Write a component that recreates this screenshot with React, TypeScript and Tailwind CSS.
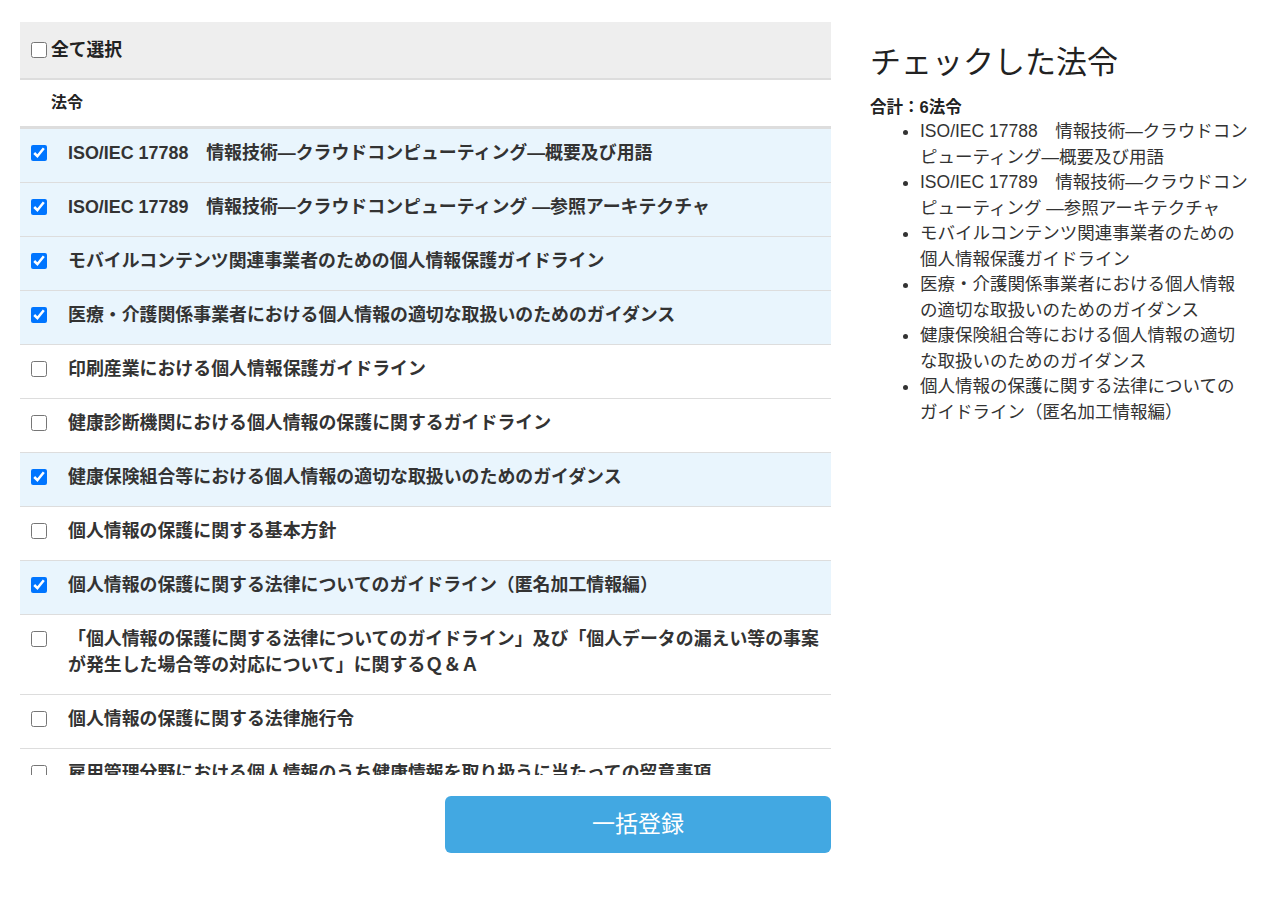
import React, { useState } from 'react';

const LAWS = [
  'ISO/IEC 17788　情報技術―クラウドコンピューティング―概要及び用語',
  'ISO/IEC 17789　情報技術―クラウドコンピューティング ―参照アーキテクチャ',
  'モバイルコンテンツ関連事業者のための個人情報保護ガイドライン',
  '医療・介護関係事業者における個人情報の適切な取扱いのためのガイダンス',
  '印刷産業における個人情報保護ガイドライン',
  '健康診断機関における個人情報の保護に関するガイドライン',
  '健康保険組合等における個人情報の適切な取扱いのためのガイダンス',
  '個人情報の保護に関する基本方針',
  '個人情報の保護に関する法律についてのガイドライン（匿名加工情報編）',
  '「個人情報の保護に関する法律についてのガイドライン」及び「個人データの漏えい等の事案が発生した場合等の対応について」に関するＱ＆Ａ',
  '個人情報の保護に関する法律施行令',
  '雇用管理分野における個人情報のうち健康情報を取り扱うに当たっての留意事項',
  '個人情報の保護に関する法律施行規則',
];

const font = { fontFamily: '"Liberation Sans", "Noto Sans CJK JP", sans-serif' };

export default function App() {
  const [checked, setChecked] = useState<boolean[]>(
    LAWS.map((_, i) => [0, 1, 2, 3, 6, 8].includes(i))
  );

  const toggle = (i: number) => {
    setChecked((prev) => prev.map((c, idx) => (idx === i ? !c : c)));
  };

  const allChecked = checked.every(Boolean);
  const selected = LAWS.filter((_, i) => checked[i]);

  return (
    <div className="min-h-[901px] bg-white text-[#333] flex pl-[20px] pt-[22px]" style={font}>
      {/* Left: law list */}
      <div className="w-[811px] flex flex-col">
        <div className="h-[56px] bg-[#eeeeee] border-b-2 border-[#dddddd] flex items-center pl-[11px] box-content">
          <label className="flex items-center gap-[4px] text-[17.8px] font-bold text-[#222] cursor-pointer">
            <input
              type="checkbox"
              checked={allChecked}
              onChange={() => setChecked(LAWS.map(() => !allChecked))}
              className="w-[16px] h-[16px] m-0"
            />
            全て選択
          </label>
        </div>
        <div className="h-[46px] border-b-[3px] border-[#dddddd] flex items-center pl-[31px] text-[16px] font-bold text-[#222] box-content">
          法令
        </div>

        <div className="h-[646px] overflow-hidden">
          {LAWS.map((law, i) => (
            <label
              key={i}
              className={`flex items-start gap-[21px] pl-[11px] pr-[6px] pt-[11px] pb-[16px] border-b border-[#dddddd] cursor-pointer ${checked[i] ? 'bg-[#e9f5fd]' : 'bg-white'}`}
            >
              <input
                type="checkbox"
                checked={checked[i]}
                onChange={() => toggle(i)}
                className="w-[16px] h-[16px] mt-[5px] m-0 shrink-0"
              />
              <span className="text-[17.9px] leading-[26px] font-bold text-[#333]">{law}</span>
            </label>
          ))}
        </div>

        <div className="flex justify-end mt-[21px]">
          <button className="w-[386px] h-[57px] rounded-[6px] bg-[#42a8e2] text-white text-[23px]">
            一括登録
          </button>
        </div>
      </div>

      {/* Right: selected summary */}
      <div className="w-[380px] ml-[39px] pt-[23px]">
        <h2 className="text-[31px] leading-[36px] text-[#222] font-normal">チェックした法令</h2>
        <p className="mt-[14px] text-[16.5px] leading-[24px] font-bold text-[#222]">合計：{selected.length}法令</p>
        <ul className="list-disc pl-[50px] text-[17.5px] leading-[25.5px] text-[#333]">
          {selected.map((law, i) => (
            <li key={i}>{law}</li>
          ))}
        </ul>
      </div>
    </div>
  );
}
